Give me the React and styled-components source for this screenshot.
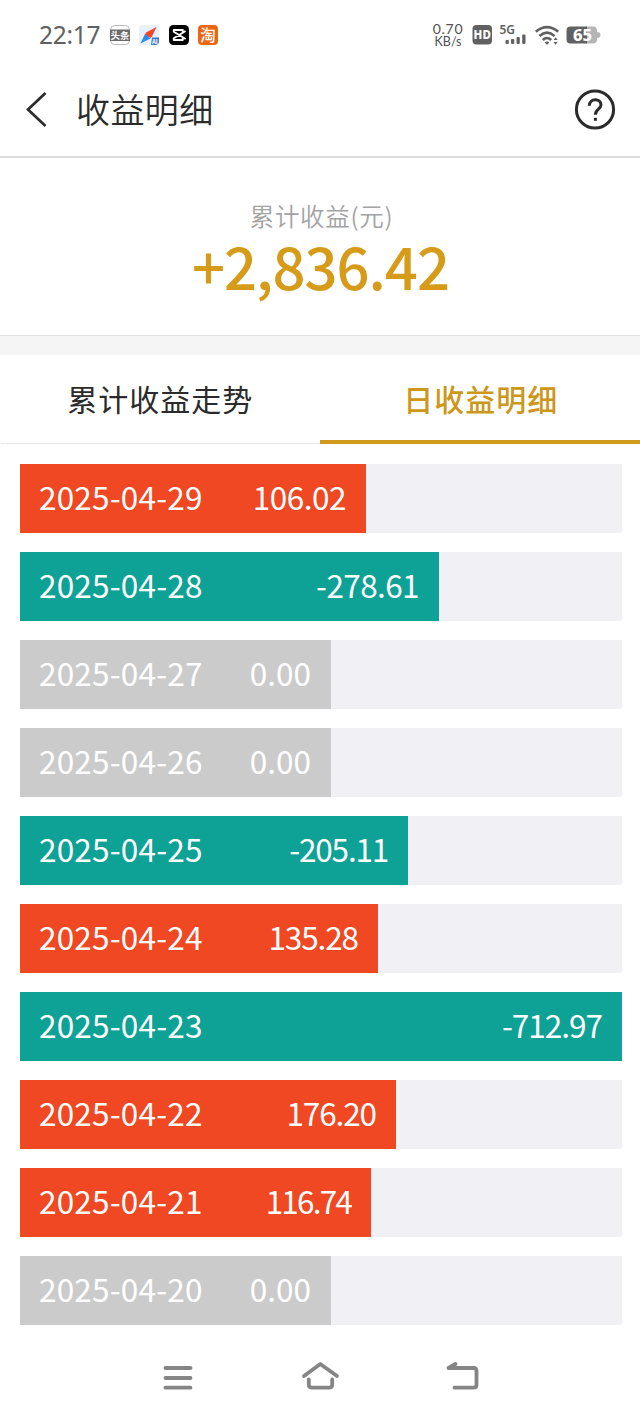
import React from 'react';
import styled, { createGlobalStyle } from 'styled-components';

const GlobalStyle = createGlobalStyle`
  * {
    box-sizing: border-box;
  }

  body {
    margin: 0;
    background: #fff;
    font-family: 'Noto Sans CJK SC', sans-serif;
    color: #2b2b2b;
  }
`;

const Screen = styled.div`
  width: 640px;
  height: 1415px;
  display: flex;
  flex-direction: column;
  background: #fff;
  overflow: hidden;
`;

const StatusBar = styled.div`
  height: 70px;
  padding: 0 39px;
  display: flex;
  align-items: center;
  justify-content: space-between;
`;

const StatusGroup = styled.div`
  display: flex;
  align-items: center;
`;

const Clock = styled.span`
  width: 71px;
  font-family: 'Noto Sans', sans-serif;
  font-size: 24.5px;
  line-height: 30px;
  letter-spacing: -0.3px;
  color: #606060;
`;

const AppIcon = styled.svg`
  width: 20px;
  height: 20px;
  margin-right: 9.3px;
  display: block;
  overflow: visible;
`;

const NetSpeed = styled.div`
  width: 31px;
  margin-right: 8px;
  display: flex;
  flex-direction: column;
  align-items: center;
  font-family: 'Lato', sans-serif;
  line-height: 13px;
  color: #505050;
  white-space: nowrap;
`;

const SpeedValue = styled.span`
  font-size: 14px;
  letter-spacing: 0.7px;
`;

const SpeedUnit = styled.span`
  font-size: 12.5px;
`;

const StatusIcon = styled.svg`
  width: ${(props) => props.$w}px;
  height: 24px;
  margin-right: ${(props) => props.$gap || 0}px;
  display: block;
  font-family: 'Noto Sans', sans-serif;
`;

const Header = styled.header`
  height: 88px;
  padding: 0 24px 8px 25px;
  display: flex;
  align-items: center;
  border-bottom: 2px solid #dcdcdc;
`;

const BackButton = styled.button`
  width: 51px;
  height: 40px;
  padding: 0;
  border: none;
  background: transparent;
`;

const BackIcon = styled.svg`
  width: 24px;
  height: 40px;
  display: block;
`;

const Title = styled.h1`
  flex: 1;
  margin: 0;
  font-size: 34px;
  font-weight: 350;
  line-height: 44px;
  letter-spacing: 0.4px;
`;

const HelpButton = styled(BackButton)`
  width: 42px;
  height: 42px;
`;

const Summary = styled.section`
  height: 178px;
  padding-top: 40px;
  border-bottom: 1px solid #dfdfdf;
  text-align: center;
`;

const SummaryLabel = styled.div`
  font-size: 24.5px;
  line-height: 35px;
  font-weight: 350;
  letter-spacing: 0.7px;
  padding-left: 3px;
  color: #a3a3a3;
`;

const SummaryValue = styled.div`
  font-size: 58px;
  font-weight: 500;
  line-height: 64px;
  letter-spacing: -1px;
  padding-left: 1px;
  color: #d69b18;
`;

const Divider = styled.div`
  height: 19px;
  background: #f5f5f5;
`;

const Tabs = styled.nav`
  height: 89px;
  display: flex;
  padding-left: 1px;
`;

const Tab = styled.button`
  flex: 1;
  padding: ${(props) => (props.$active ? '0 0 0 2px' : '0 0 3px')};
  border: none;
  border-bottom: ${(props) => (props.$active ? '4px solid #d09a1d' : '1px solid #e6e6e6')};
  background: transparent;
  font-family: inherit;
  font-size: 30px;
  font-weight: ${(props) => (props.$active ? 500 : 400)};
  letter-spacing: 1px;
  color: ${(props) => (props.$active ? '#cd971b' : '#2b2b2b')};
`;

const List = styled.main`
  padding: 20px 18px 0 20px;
  display: flex;
  flex-direction: column;
  gap: 19.5px;
`;

const Row = styled.div`
  height: 68.5px;
  background: #f1f0f5;
`;

const barColors = {
  up: '#f04822',
  down: '#0ea196',
  flat: '#cbcbcb',
};

const Bar = styled.div`
  height: 100%;
  padding: 0 20px 5px 19px;
  display: flex;
  align-items: center;
  justify-content: space-between;
  background: ${(props) => barColors[props.$kind]};
  color: #fff;
  font-size: 31.5px;
  font-weight: 400;
  line-height: 40px;
  white-space: nowrap;
`;

const DateText = styled.span`
  letter-spacing: 0.2px;
`;

const Amount = styled.span`
  letter-spacing: ${(props) => props.$tracking || 0}px;
`;

const NavBar = styled.footer`
  margin-top: auto;
  height: 90px;
  padding: 25px 157px 0 158px;
  display: flex;
  align-items: flex-start;
  justify-content: space-between;
`;

const NavIcon = styled.svg`
  width: 40px;
  height: 44px;
  fill: none;
  stroke: #858585;
  stroke-width: 3.8;
  stroke-linecap: round;
  stroke-linejoin: round;
`;

const records = [
  { date: '2025-04-29', amount: 106.02, width: 346, tracking: -0.5 },
  { date: '2025-04-28', amount: -278.61, width: 419, tracking: -0.6 },
  { date: '2025-04-27', amount: 0, width: 311 },
  { date: '2025-04-26', amount: 0, width: 311 },
  { date: '2025-04-25', amount: -205.11, width: 388, tracking: -1.2 },
  { date: '2025-04-24', amount: 135.28, width: 358, tracking: -1.1 },
  { date: '2025-04-23', amount: -712.97, width: 602, tracking: -1 },
  { date: '2025-04-22', amount: 176.2, width: 376, tracking: -1.1 },
  { date: '2025-04-21', amount: 116.74, width: 351, tracking: -1.8 },
  { date: '2025-04-20', amount: 0, width: 311 },
];

const getKind = (amount) => {
  if (amount > 0) return 'up';
  return amount < 0 ? 'down' : 'flat';
};

function StatusLeft() {
  return (
    <StatusGroup>
      <Clock>22:17</Clock>
      <AppIcon viewBox="0 0 20 20">
        <rect x="0.5" y="0.5" width="19" height="19" rx="4" fill="#fff" stroke="#bbb" />
        <rect x="0" y="4.5" width="20" height="11.5" fill="#6b6b6b" />
        <text x="10" y="13.8" fontSize="9.5" fontWeight="700" fill="#fff" textAnchor="middle">头条</text>
      </AppIcon>
      <AppIcon viewBox="0 0 20 20">
        <rect width="20" height="20" rx="4" fill="#e9f1f8" />
        <path d="M17.5 2 L7 7.500 L6 10 L11.500 13 L13 11.500 Z" fill="#f0482b" />
        <path d="M6 9 L1.500 18.500 L11.500 13.500 Z" fill="#2f8bea" />
        <path d="M13 12.500h7v3.500a4 4 0 0 1-4 4h-4z" fill="#3b78d0" />
        <text x="13" y="18.600" fontSize="6" fontWeight="700" fill="#fff">AI</text>
      </AppIcon>
      <AppIcon viewBox="0 0 20 20">
        <rect width="20" height="20" rx="4.5" fill="#050505" />
        <path d="M16.600 6 L4.800 13.200 V15 H13.800 V13 M16.600 14 L4.800 6.800 V5 H13.800 V7" fill="none" stroke="#fff" strokeWidth="1.900" strokeLinejoin="round" />
      </AppIcon>
      <AppIcon viewBox="0 0 20 20">
        <rect width="20" height="20" rx="4" fill="#ed6510" />
        <text x="10" y="15.600" fontSize="15.500" fontWeight="500" fill="#fff" textAnchor="middle">淘</text>
      </AppIcon>
    </StatusGroup>
  );
}

function StatusRight() {
  return (
    <StatusGroup>
      <NetSpeed>
        <SpeedValue>0.70</SpeedValue>
        <SpeedUnit>KB/s</SpeedUnit>
      </NetSpeed>
      <StatusIcon viewBox="0 0 20 24" $w={20} $gap={7}>
        <rect x="0.5" y="2" width="19.5" height="19.5" rx="4" fill="#616161" />
        <text x="10.2" y="16" fontSize="11.5" fontWeight="800" fill="#fff" textAnchor="middle">HD</text>
      </StatusIcon>
      <StatusIcon viewBox="0 0 28 24" $w={28} $gap={8}>
        <text x="0.5" y="11" fontSize="12" fontWeight="600" fill="#616161">5G</text>
        <rect x="6.5" y="17" width="3.3" height="4" rx="1" fill="#616161" />
        <rect x="12" y="16" width="3.3" height="5" rx="1" fill="#616161" />
        <rect x="17.5" y="14" width="3.3" height="7" rx="1" fill="#616161" />
        <rect x="23.2" y="11.5" width="3.3" height="9.5" rx="1" fill="#616161" />
      </StatusIcon>
      <StatusIcon viewBox="0 0 25 24" $w={25} $gap={6.5}>
        <g fill="none" stroke="#616161" strokeWidth="2.6">
          <path d="M0.8 8.7 Q12 -0.3 23.2 8.7" />
          <path d="M4.4 12.9 Q12 6.3 19.6 12.9" />
          <path d="M7.8 17 Q12 13 16.2 17" />
        </g>
        <path d="M9.6 19.3 Q12 17.5 14.4 19.3 L12 22 Z" fill="#616161" />
        <path d="M18.6 17 L20.6 14.3 L22.6 17 Z M18.6 19 L20.6 21.7 L22.6 19 Z" fill="#616161" />
      </StatusIcon>
      <StatusIcon viewBox="0 0 35 24" $w={35}>
        <path d="M20 3.5h7a4 4 0 0 1 4 4v9a4 4 0 0 1-4 4h-7z M31 9q3.5 0 3.5 3t-3.5 3z" fill="#b5b5b5" />
        <path d="M4.5 3.5H21v17H4.5a4 4 0 0 1-4-4v-9a4 4 0 0 1 4-4z" fill="#616161" />
        <text x="16.5" y="18" fontSize="16.5" fontWeight="800" fill="#fff" textAnchor="middle">65</text>
      </StatusIcon>
    </StatusGroup>
  );
}

function App() {
  return (
    <>
      <GlobalStyle />
      <Screen>
        <StatusBar>
          <StatusLeft />
          <StatusRight />
        </StatusBar>
        <Header>
          <BackButton aria-label="返回">
            <BackIcon viewBox="0 0 24 40">
              <path d="M20.5 4 L3 20.5 L20.5 37" fill="none" stroke="#2b2b2b" strokeWidth="2.7" />
            </BackIcon>
          </BackButton>
          <Title>收益明细</Title>
          <HelpButton aria-label="帮助">
            <svg width="42" height="42" viewBox="0 0 42 42">
              <circle cx="21" cy="21.5" r="18.6" fill="none" stroke="#2b2b2b" strokeWidth="3" />
              <path d="M15.3 17.8 C15.3 9.8 27 9.8 27 16.8 C27 21.3 21.4 21 21.4 26.7" fill="none" stroke="#2b2b2b" strokeWidth="3" />
              <rect x="19.9" y="29.8" width="3" height="3" fill="#2b2b2b" />
            </svg>
          </HelpButton>
        </Header>
        <Summary>
          <SummaryLabel>累计收益(元)</SummaryLabel>
          <SummaryValue>+2,836.42</SummaryValue>
        </Summary>
        <Divider />
        <Tabs>
          <Tab>累计收益走势</Tab>
          <Tab $active>日收益明细</Tab>
        </Tabs>
        <List>
          {records.map((item) => (
            <Row key={item.date}>
              <Bar $kind={getKind(item.amount)} style={{ width: item.width }}>
                <DateText>{item.date}</DateText>
                <Amount $tracking={item.tracking}>{item.amount.toFixed(2)}</Amount>
              </Bar>
            </Row>
          ))}
        </List>
        <NavBar>
          <NavIcon viewBox="0 0 40 44">
            <path d="M7.5 18H32.5M7.5 28H32.5M7.5 37.7H32.5" />
          </NavIcon>
          <NavIcon viewBox="0 0 40 44">
            <path d="M3 26 L19.3 14 L36 26 M7.8 29.5 V34.5 Q7.8 37.7 11 37.7 H28 Q31.2 37.7 31.2 34.5 V29.5" />
          </NavIcon>
          <NavIcon viewBox="0 0 40 44">
            <path d="M12.5 14 L5.5 18 H30.5 Q33.5 18 33.5 21 V34.7 Q33.5 37.7 30.5 37.7 H11.5" />
          </NavIcon>
        </NavBar>
      </Screen>
    </>
  );
}

export default App;
